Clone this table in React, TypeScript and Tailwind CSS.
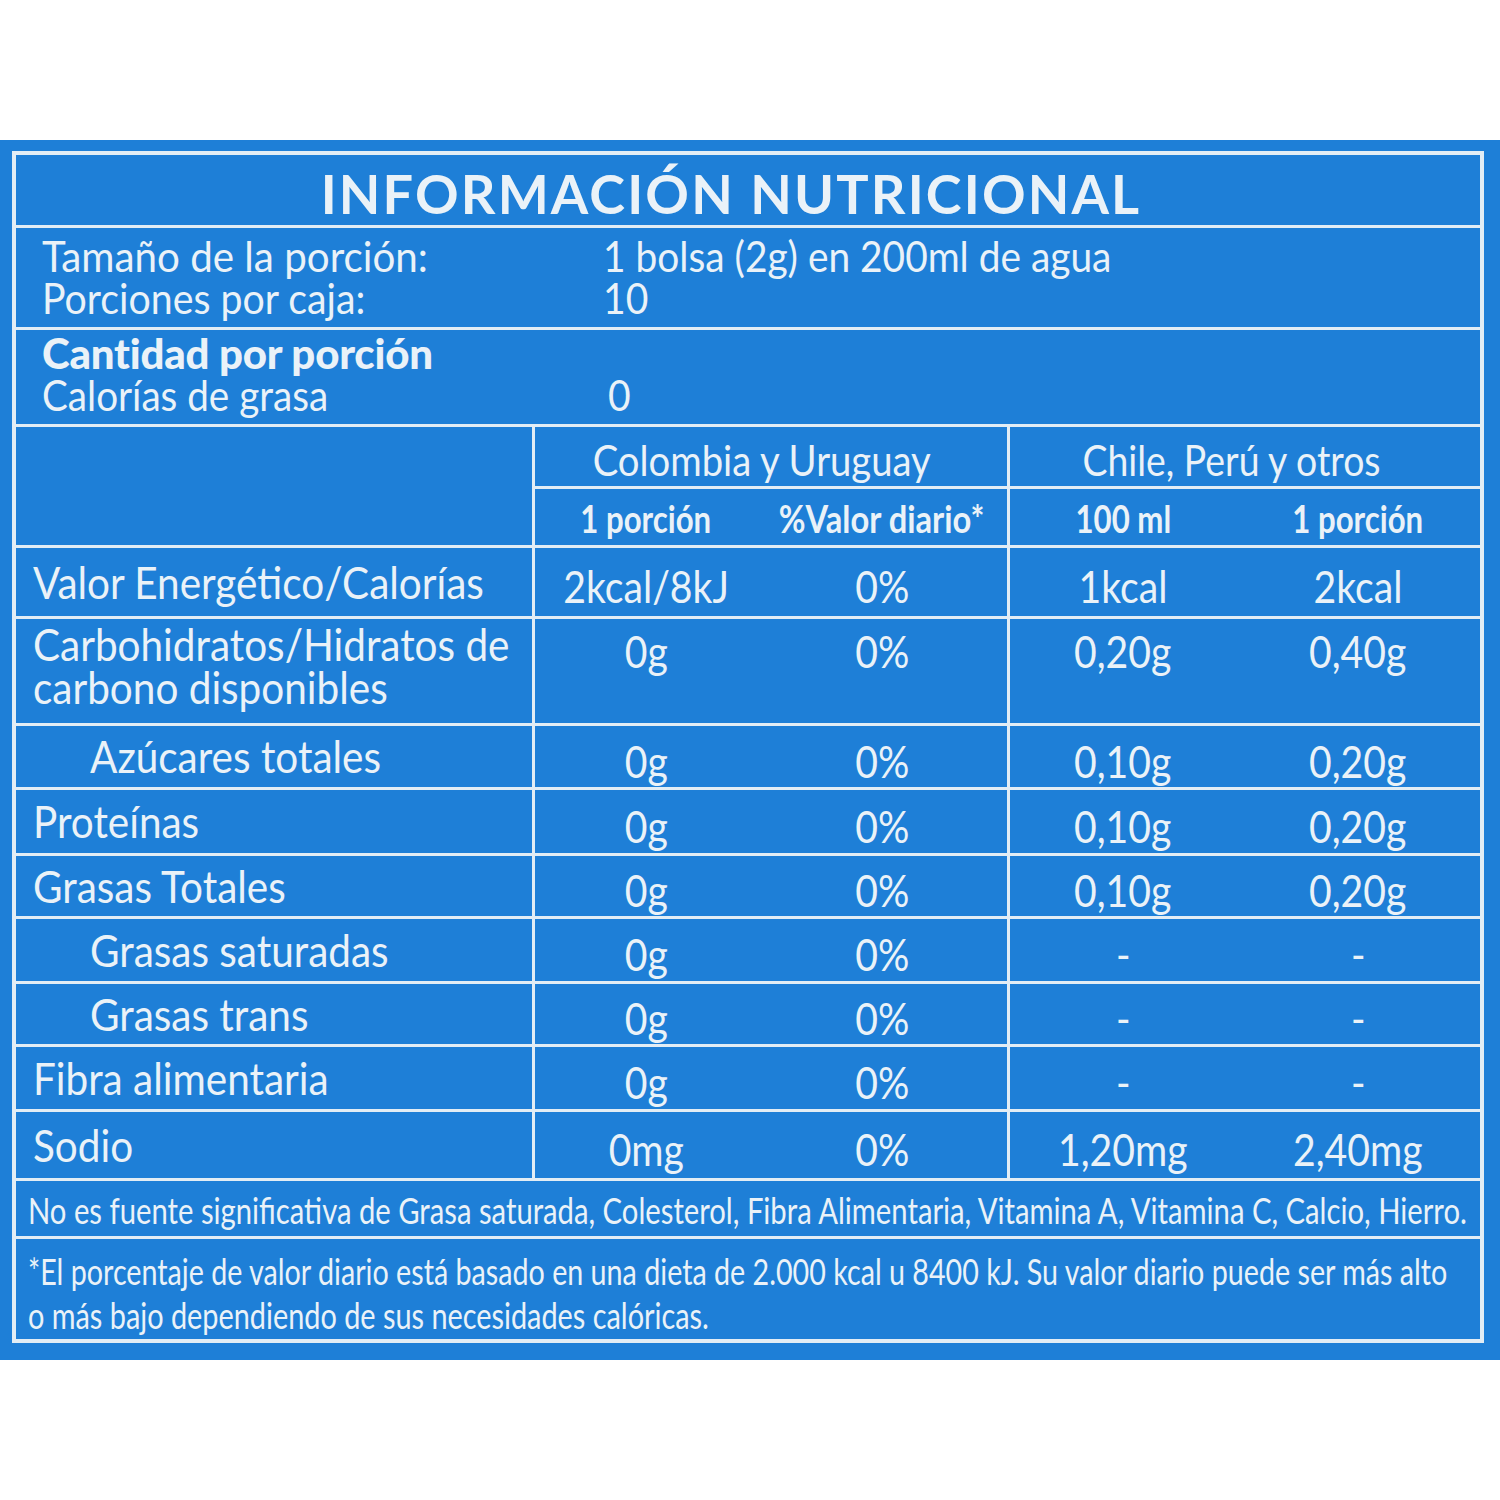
import React from "react";

type Row = {
  label: string[];
  indent?: boolean;
  h: string;
  multi?: boolean;
  vals: string[];
};

const rows: Row[] = [
  { label: ["Valor Energético/Calorías"], h: "h-[71px]", vals: ["2kcal/8kJ", "0%", "1kcal", "2kcal"] },
  {
    label: ["Carbohidratos/Hidratos de", "carbono disponibles"],
    h: "h-[107px]",
    multi: true,
    vals: ["0g", "0%", "0,20g", "0,40g"],
  },
  { label: ["Azúcares totales"], indent: true, h: "h-[64px]", vals: ["0g", "0%", "0,10g", "0,20g"] },
  { label: ["Proteínas"], h: "h-[66px]", vals: ["0g", "0%", "0,10g", "0,20g"] },
  { label: ["Grasas Totales"], h: "h-[63px]", vals: ["0g", "0%", "0,10g", "0,20g"] },
  { label: ["Grasas saturadas"], indent: true, h: "h-[65px]", vals: ["0g", "0%", "-", "-"] },
  { label: ["Grasas trans"], indent: true, h: "h-[63px]", vals: ["0g", "0%", "-", "-"] },
  { label: ["Fibra alimentaria"], h: "h-[65px]", vals: ["0g", "0%", "-", "-"] },
  { label: ["Sodio"], h: "h-[69px]", vals: ["0mg", "0%", "1,20mg", "2,40mg"] },
];

function S({ children, cls }: { children: React.ReactNode; cls: string }) {
  return <span className={`inline-block whitespace-nowrap ${cls}`}>{children}</span>;
}

function Val({ v, multi, className }: { v: string; multi?: boolean; className: string }) {
  return (
    <div
      className={`flex justify-center ${multi ? "items-start pt-[10px]" : "items-center pt-[8px]"} ${className}`}
    >
      <S cls="origin-center scale-x-[0.89] text-[44px] leading-none">{v}</S>
    </div>
  );
}

export default function App() {
  return (
    <div className="min-h-[1500px] w-[1500px] overflow-hidden bg-white pt-[140px] font-['Lato',sans-serif] text-[#eaf2f8]">
      <div className="h-[1220px] bg-[#1e7fd7] pb-[17px] pl-[12px] pr-[16px] pt-[11px]">
        <div className="flex h-[1192px] w-[1472px] flex-col overflow-hidden border-4 border-[#e2edf5]">
          {/* Title */}
          <div className="flex h-[73px] shrink-0 justify-center border-b-[3px] border-[#e2edf5] pr-[34px] pt-[12px]">
            <span className="whitespace-nowrap text-[54px] font-bold leading-none tracking-[0.04em]">
              INFORMACIÓN NUTRICIONAL
            </span>
          </div>

          {/* Serving size */}
          <div className="flex h-[102px] shrink-0 border-b-[3px] border-[#e2edf5] pt-[7px] text-[42px] leading-[42px]">
            <div className="w-[587px] pl-[26px]">
              <div>
                <S cls="origin-left scale-x-[0.96]">Tamaño de la porción:</S>
              </div>
              <div>
                <S cls="origin-left scale-x-[0.935]">Porciones por caja:</S>
              </div>
            </div>
            <div>
              <div>
                <S cls="origin-left scale-x-[0.925]">1 bolsa (2g) en 200ml de agua</S>
              </div>
              <div>
                <S cls="origin-left scale-x-[0.93]">10</S>
              </div>
            </div>
          </div>

          {/* Amount per serving */}
          <div className="flex h-[97px] shrink-0 border-b-[3px] border-[#e2edf5] pt-[2px] text-[42px] leading-[42px]">
            <div className="w-[592px] pl-[26px]">
              <div>
                <S cls="origin-left font-black tracking-[-0.005em]">Cantidad por porción</S>
              </div>
              <div>
                <S cls="origin-left scale-x-[0.92]">Calorías de grasa</S>
              </div>
            </div>
            <div>
              <div>&nbsp;</div>
              <div>
                <S cls="origin-left scale-x-[0.93]">0</S>
              </div>
            </div>
          </div>

          {/* Column headers */}
          <div className="flex h-[121px] shrink-0 border-b-[3px] border-[#e2edf5]">
            <div className="w-[519px] border-r-[3px] border-[#e2edf5]" />
            <div className="flex w-[475px] flex-col border-r-[3px] border-[#e2edf5]">
              <div className="flex h-[62px] shrink-0 justify-center border-b-[3px] border-[#e2edf5] pr-[18px] pt-[12px]">
                <S cls="origin-center scale-x-[0.91] text-[42px] leading-none">Colombia y Uruguay</S>
              </div>
              <div className="flex flex-1 pt-[10px]">
                <div className="flex w-[222px] justify-center">
                  <S cls="origin-center scale-x-[0.82] text-[38px] font-bold leading-none">1 porción</S>
                </div>
                <div className="flex flex-1 justify-center">
                  <S cls="origin-center scale-x-[0.86] text-[38px] font-bold leading-none">%Valor diario*</S>
                </div>
              </div>
            </div>
            <div className="flex flex-1 flex-col">
              <div className="flex h-[62px] shrink-0 justify-center border-b-[3px] border-[#e2edf5] pr-[28px] pt-[12px]">
                <S cls="origin-center scale-x-[0.89] text-[42px] leading-none">Chile, Perú y otros</S>
              </div>
              <div className="flex flex-1 pt-[10px]">
                <div className="flex w-[226px] justify-center">
                  <S cls="origin-center scale-x-[0.82] text-[38px] font-bold leading-none">100 ml</S>
                </div>
                <div className="flex flex-1 justify-center">
                  <S cls="origin-center scale-x-[0.82] text-[38px] font-bold leading-none">1 porción</S>
                </div>
              </div>
            </div>
          </div>

          {/* Data rows */}
          {rows.map((r, i) => (
            <div key={i} className={`flex shrink-0 border-b-[3px] border-[#e2edf5] ${r.h}`}>
              <div
                className={`flex w-[519px] border-r-[3px] border-[#e2edf5] ${
                  r.multi ? "items-start pt-[4px]" : "items-center"
                } ${r.indent ? "pl-[74px]" : "pl-[17px]"}`}
              >
                <div className="origin-left scale-x-[0.92] whitespace-nowrap text-[44px] leading-[43px]">
                  {r.label.map((l, j) => (
                    <div key={j}>{l}</div>
                  ))}
                </div>
              </div>
              <div className="flex w-[475px] border-r-[3px] border-[#e2edf5]">
                <Val v={r.vals[0]} multi={r.multi} className="w-[222px]" />
                <Val v={r.vals[1]} multi={r.multi} className="flex-1" />
              </div>
              <div className="flex flex-1">
                <Val v={r.vals[2]} multi={r.multi} className="w-[226px]" />
                <Val v={r.vals[3]} multi={r.multi} className="flex-1" />
              </div>
            </div>
          ))}

          {/* Footnote 1 */}
          <div className="flex h-[58px] shrink-0 items-center overflow-hidden border-b-[3px] border-[#e2edf5] pl-[12px] pt-[2px]">
            <S cls="origin-left scale-x-[0.79] text-[37px] leading-none">
              No es fuente significativa de Grasa saturada, Colesterol, Fibra Alimentaria, Vitamina A, Vitamina C, Calcio,
              Hierro.
            </S>
          </div>

          {/* Footnote 2 */}
          <div className="flex-1 overflow-hidden pl-[12px] pt-[10px] text-[37px] leading-[44px]">
            <div>
              <S cls="origin-left scale-x-[0.775]">
                *El porcentaje de valor diario está basado en una dieta de 2.000 kcal u 8400 kJ. Su valor diario puede ser
                más alto
              </S>
            </div>
            <div>
              <S cls="origin-left scale-x-[0.78]">o más bajo dependiendo de sus necesidades calóricas.</S>
            </div>
          </div>
        </div>
      </div>
    </div>
  );
}
